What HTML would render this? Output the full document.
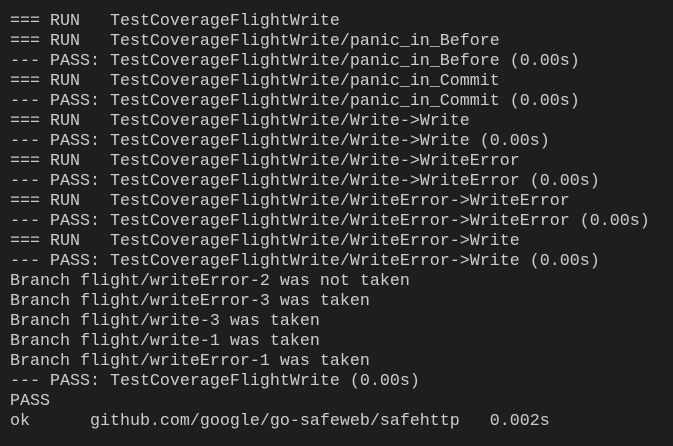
<!DOCTYPE html>
<html><head><meta charset="utf-8"><style>
html,body{margin:0;padding:0;background:#1e1e1e;width:673px;height:446px;overflow:hidden}
pre{margin:0;padding:12px 0 0 10px;font-family:"Courier New","Nimbus Mono PS","Nimbus Mono L",Courier,"Liberation Mono",monospace;font-size:16.67px;line-height:20px;color:#cccccc}
</style></head><body><pre>=== RUN   TestCoverageFlightWrite
=== RUN   TestCoverageFlightWrite/panic_in_Before
--- PASS: TestCoverageFlightWrite/panic_in_Before (0.00s)
=== RUN   TestCoverageFlightWrite/panic_in_Commit
--- PASS: TestCoverageFlightWrite/panic_in_Commit (0.00s)
=== RUN   TestCoverageFlightWrite/Write-&gt;Write
--- PASS: TestCoverageFlightWrite/Write-&gt;Write (0.00s)
=== RUN   TestCoverageFlightWrite/Write-&gt;WriteError
--- PASS: TestCoverageFlightWrite/Write-&gt;WriteError (0.00s)
=== RUN   TestCoverageFlightWrite/WriteError-&gt;WriteError
--- PASS: TestCoverageFlightWrite/WriteError-&gt;WriteError (0.00s)
=== RUN   TestCoverageFlightWrite/WriteError-&gt;Write
--- PASS: TestCoverageFlightWrite/WriteError-&gt;Write (0.00s)
Branch flight/writeError-2 was not taken
Branch flight/writeError-3 was taken
Branch flight/write-3 was taken
Branch flight/write-1 was taken
Branch flight/writeError-1 was taken
--- PASS: TestCoverageFlightWrite (0.00s)
PASS
ok      github.com/google/go-safeweb/safehttp   0.002s
</pre></body></html>
